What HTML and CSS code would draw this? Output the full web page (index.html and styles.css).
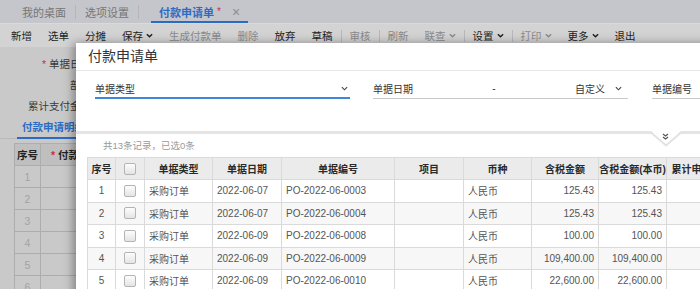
FILE: index.html
```html
<!DOCTYPE html>
<html lang="zh-CN">
<head>
  <meta charset="UTF-8" />
  <title>付款申请单</title>
  <link rel="stylesheet" href="styles.css">
</head>
<body>
  <div class="tabs">
    <span class="tab">我的桌面</span>
    <span class="tab-sep"></span>
    <span class="tab">选项设置</span>
    <span class="tab-sep"></span>
    <span class="tab active">付款申请单<i class="req">*</i><span class="close">×</span></span>
  </div>

  <div class="toolbar">
    <span class="tb">新增</span>
    <span class="tb">选单</span>
    <span class="tb">分摊</span>
    <span class="tb">保存<svg class="caret" viewBox="0 0 8 5"><polyline points="1,1 4,4 7,1"/></svg></span>
    <span class="tb off">生成付款单</span>
    <span class="tb off">删除</span>
    <span class="tb">放弃</span>
    <span class="tb">草稿</span>
    <span class="tb-sep"></span>
    <span class="tb off">审核</span>
    <span class="tb-sep"></span>
    <span class="tb off">刷新</span>
    <span class="tb off">联查<svg class="caret" viewBox="0 0 8 5"><polyline points="1,1 4,4 7,1"/></svg></span>
    <span class="tb-sep"></span>
    <span class="tb">设置<svg class="caret" viewBox="0 0 8 5"><polyline points="1,1 4,4 7,1"/></svg></span>
    <span class="tb-sep"></span>
    <span class="tb off">打印<svg class="caret" viewBox="0 0 8 5"><polyline points="1,1 4,4 7,1"/></svg></span>
    <span class="tb">更多<svg class="caret" viewBox="0 0 8 5"><polyline points="1,1 4,4 7,1"/></svg></span>
    <span class="tb">退出</span>
  </div>

  <div class="page">
    <div class="form-row"><label><i class="req">*</i> 单据日期</label></div>
    <div class="form-row"><label>部门</label></div>
    <div class="form-row"><label>累计支付金额</label></div>

    <div class="subtabs"><span class="subtab">付款申请明细</span></div>

    <table class="grid">
      <tr><th class="c-no">序号</th><th class="c-pay"><i class="req">*</i> 付款类型</th></tr>
      <tr><td class="c-no">1</td><td></td></tr>
      <tr><td class="c-no">2</td><td></td></tr>
      <tr><td class="c-no">3</td><td></td></tr>
      <tr><td class="c-no">4</td><td></td></tr>
      <tr><td class="c-no">5</td><td></td></tr>
      <tr><td class="c-no">6</td><td></td></tr>
    </table>
  </div>

  <!-- 弹窗：选单 -->
  <div class="modal">
    <div class="modal-title">付款申请单</div>

    <div class="filter">
      <div class="field active">
        <span class="field-label">单据类型</span>
        <svg class="chev" viewBox="0 0 8 5"><polyline points="1,1 4,4 7,1"/></svg>
      </div>
      <div class="field date">
        <span class="field-label">单据日期</span>
        <span class="range">-</span>
        <span class="unit">自定义</span>
        <svg class="chev" viewBox="0 0 8 5"><polyline points="1,1 4,4 7,1"/></svg>
      </div>
      <div class="field code">
        <span class="field-label">单据编号</span>
      </div>

      <svg class="notch" width="30" height="16" viewBox="0 0 30 16">
        <polygon points="0,0 30,0 15,14" fill="#fff"/>
        <polyline points="0,1.5 15,14.5 30,1.5" fill="none" stroke="#e2e2e2" stroke-width="2"/>
        <polyline points="12,3 14.5,5 17,3" fill="none" stroke="#555" stroke-width="1.2"/>
        <polyline points="12,6 14.5,8 17,6" fill="none" stroke="#555" stroke-width="1.2"/>
      </svg>
    </div>

    <div class="count">共13条记录，已选0条</div>

    <table class="list">
      <colgroup>
        <col style="width:28px"><col style="width:29px"><col style="width:68px"><col style="width:69px">
        <col style="width:113px"><col style="width:69px"><col style="width:68px"><col style="width:67px">
        <col style="width:68px"><col style="width:70px">
      </colgroup>
      <thead>
        <tr>
          <th>序号</th><th><span class="cb"></span></th><th>单据类型</th><th>单据日期</th><th>单据编号</th>
          <th>项目</th><th>币种</th><th>含税金额</th><th>含税金额(本币)</th><th>累计申请金额</th>
        </tr>
      </thead>
      <tbody>
        <tr><td class="no">1</td><td class="chk"><span class="cb"></span></td><td>采购订单</td><td>2022-06-07</td><td>PO-2022-06-0003</td><td></td><td>人民币</td><td class="num">125.43</td><td class="num">125.43</td><td></td></tr>
        <tr><td class="no">2</td><td class="chk"><span class="cb"></span></td><td>采购订单</td><td>2022-06-07</td><td>PO-2022-06-0004</td><td></td><td>人民币</td><td class="num">125.43</td><td class="num">125.43</td><td></td></tr>
        <tr><td class="no">3</td><td class="chk"><span class="cb"></span></td><td>采购订单</td><td>2022-06-09</td><td>PO-2022-06-0008</td><td></td><td>人民币</td><td class="num">100.00</td><td class="num">100.00</td><td></td></tr>
        <tr><td class="no">4</td><td class="chk"><span class="cb"></span></td><td>采购订单</td><td>2022-06-09</td><td>PO-2022-06-0009</td><td></td><td>人民币</td><td class="num">109,400.00</td><td class="num">109,400.00</td><td></td></tr>
        <tr><td class="no">5</td><td class="chk"><span class="cb"></span></td><td>采购订单</td><td>2022-06-09</td><td>PO-2022-06-0010</td><td></td><td>人民币</td><td class="num">22,600.00</td><td class="num">22,600.00</td><td></td></tr>
      </tbody>
    </table>
  </div>
</body>
</html>
```

FILE: styles.css
```css
body {
  margin: 0;
  width: 700px;
  height: 289px;
  overflow: hidden;
  position: relative;
  font-family: "Liberation Sans", "Noto Sans CJK SC", sans-serif;
  background-color: #c9c9c9;
  color: #222;
}

i.req {
  font-style: normal;
  color: #c8333a;
}

/* 顶部页签 */
.tabs {
  height: 23px;
  box-sizing: border-box;
  display: flex;
  align-items: center;
  padding-left: 13px;
  background-color: #c4c6cc;
  font-size: 11px;
  color: #767676;
}

.tab {
  height: 23px;
  box-sizing: border-box;
  display: flex;
  align-items: center;
  padding: 0 9px;
}

.tab-sep {
  width: 1px;
  height: 14px;
  background-color: #b3b5ba;
}

.tab.active {
  margin-left: 12px;
  padding: 0 8px;
  color: #2c6bc4;
  font-weight: bold;
  border-bottom: 2px solid #2c6bc4;
  padding-top: 2px;
}

.tab.active .req {
  font-weight: normal;
  font-size: 10px;
  margin-left: 3px;
  align-self: flex-start;
  margin-top: 4px;
}

.tab .close {
  margin-left: 11px;
  font-weight: normal;
  font-size: 14px;
  color: #8d8d8d;
}

/* 工具栏 */
.toolbar {
  height: 23px;
  display: flex;
  align-items: center;
  padding-left: 3px;
  background-color: #d3d3d3;
  border-top: 1px solid #dadada;
  font-size: 10.5px;
  color: #1e1e1e;
}

.tb {
  padding: 0 8px;
  display: flex;
  align-items: center;
  white-space: nowrap;
}

.tb.off {
  color: #8a8a8a;
}

.tb-sep {
  width: 1px;
  height: 12px;
  background-color: #b8b8b8;
}

.caret {
  width: 7px;
  height: 5px;
  margin-left: 3px;
  fill: none;
  stroke: currentColor;
  stroke-width: 1.6;
}

/* 背景单据 */
.page {
  padding-top: 6px;
  font-size: 10.5px;
  color: #3a3a3a;
}

.form-row {
  height: 21px;
  display: flex;
  align-items: center;
}

.form-row label {
  width: 91px;
  text-align: right;
}

.subtabs {
  height: 21px;
  margin-top: 1px;
  display: flex;
  align-items: flex-end;
  border-bottom: 1px solid #b9b9b9;
}

.subtab {
  margin-left: 17px;
  padding: 0 5px 3px;
  color: #2c6bc4;
  font-weight: bold;
  border-bottom: 2px solid #2c6bc4;
  margin-bottom: -1px;
}

.grid {
  margin: 4px 0 0 14px;
  border-collapse: collapse;
  table-layout: fixed;
  font-size: 10.5px;
}

.grid th, .grid td {
  border: 1px solid #adadad;
  height: 21px;
  padding: 0;
}

.grid th {
  background-color: #bfbfbf;
  color: #222;
}

.grid .c-no {
  width: 25px;
  text-align: center;
}

.grid td.c-no {
  color: #a3a3a3;
}

.grid .c-pay {
  width: 120px;
  text-align: left;
  padding-left: 10px;
}

/* 弹窗 */
.modal {
  position: absolute;
  left: 76px;
  top: 43px;
  width: 660px;
  height: 260px;
  background-color: #fff;
  box-shadow: -3px 0 9px rgba(0, 0, 0, 0.35);
}

.modal-title {
  height: 27px;
  line-height: 27px;
  padding-left: 12px;
  font-size: 14px;
  color: #333;
  border-bottom: 1px solid #e8e8e8;
}

.filter {
  position: relative;
  height: 60px;
  padding-left: 19px;
  display: flex;
  align-items: flex-start;
  border-bottom: 3px solid #e4e4e4;
  font-size: 10px;
  color: #333;
}

.field {
  margin-top: 8px;
  width: 255px;
  height: 20px;
  box-sizing: border-box;
  display: flex;
  align-items: center;
  border-bottom: 1px solid #c9c9c9;
}

.field.active {
  border-bottom: 2px solid #3f86e0;
}

.field .field-label {
  flex: 1;
}

.field .chev {
  width: 7px;
  height: 5px;
  margin-right: 2px;
  fill: none;
  stroke: #444;
  stroke-width: 1.3;
}

.field.date {
  margin-left: 23px;
}

.field.date .field-label {
  flex: none;
  width: 40px;
}

.field.date .range {
  flex: 1;
  text-align: center;
}

.field.date .unit {
  margin-right: 10px;
}

.field.date .chev {
  margin-right: 6px;
}

.field.code {
  margin-left: 24px;
  width: 80px;
}

.notch {
  position: absolute;
  left: 575px;
  top: 60px;
}

.count {
  height: 23px;
  line-height: 23px;
  padding-left: 27px;
  font-size: 9.5px;
  color: #9a9a9a;
}

.list {
  margin-left: 11px;
  border-collapse: collapse;
  table-layout: fixed;
  width: 629px;
  font-size: 10px;
  color: #555;
}

.list th, .list td {
  border: 1px solid #dadada;
  padding: 0 4px;
  white-space: nowrap;
  overflow: hidden;
}

.list th {
  height: 21px;
  padding: 0;
  background-color: #ebebeb;
  color: #2a2a2a;
  font-weight: bold;
  text-align: center;
}

.list td {
  height: 21.5px;
}

.list tbody tr:nth-child(even) td {
  background-color: #f7f7f7;
}

.list td.no, .list td.chk {
  text-align: center;
  padding: 0;
}

.list td.num {
  text-align: right;
}

.cb {
  display: inline-block;
  width: 10px;
  height: 10px;
  vertical-align: middle;
  border: 1px solid #b4b4b4;
  border-radius: 2px;
  background: linear-gradient(#fdfdfd, #e4e4e4);
}
```
